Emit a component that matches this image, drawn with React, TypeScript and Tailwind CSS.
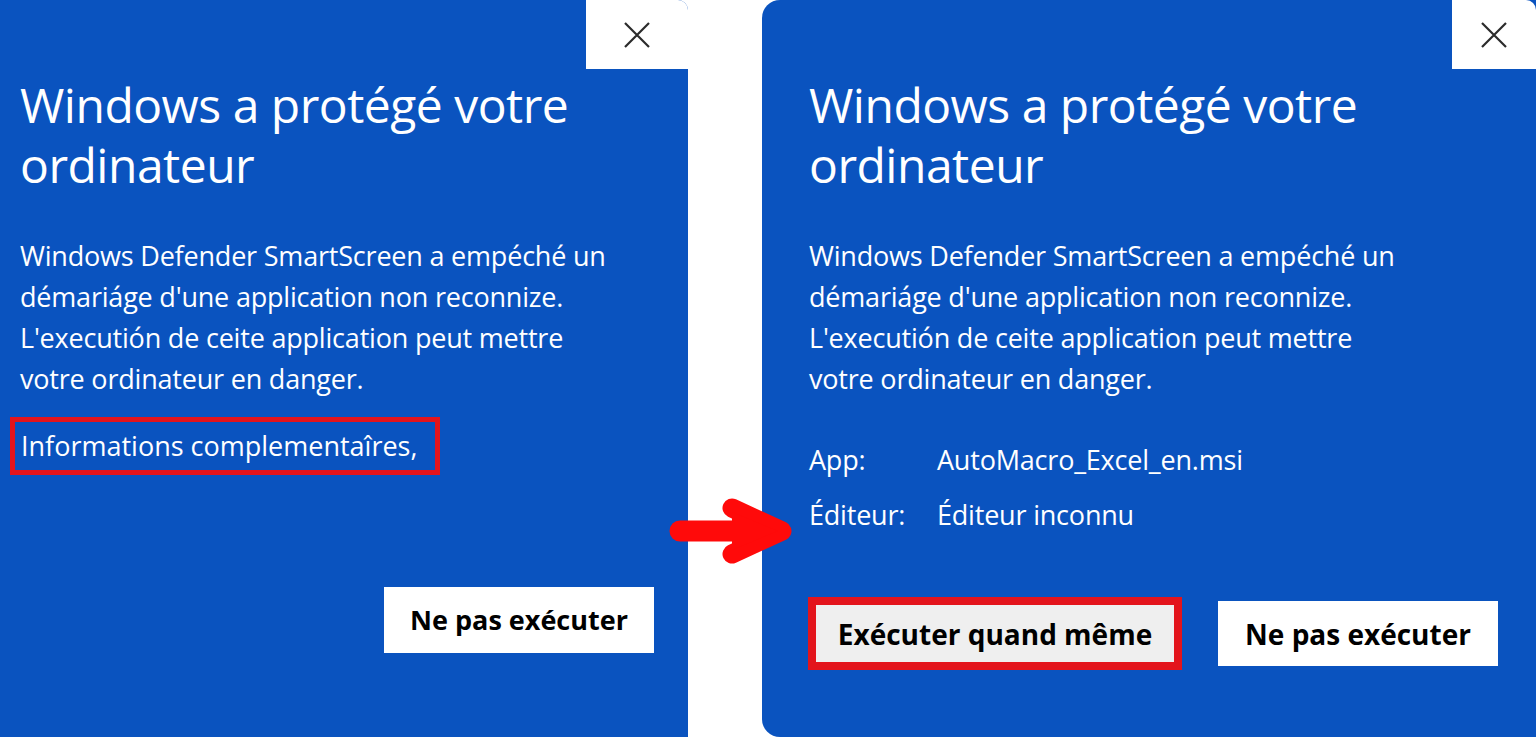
import React from "react";

const font = { fontFamily: '"Open Sans", "Noto Sans", sans-serif' };

function CloseBox({ w }: { w: string }) {
  return (
    <div className={`${w} h-[69px] bg-white flex items-center justify-center rounded-tr-[10px]`}>
      <svg width="28" height="28" viewBox="0 0 28 28">
        <path d="M2 2 L26 26 M26 2 L2 26" stroke="#2b2b2b" strokeWidth="2.2" fill="none" />
      </svg>
    </div>
  );
}

function Title() {
  return (
    <h1 className="text-[48px] leading-[60px] font-normal text-white tracking-[-0.5px]">
      Windows a protégé votre
      <br />
      ordinateur
    </h1>
  );
}

function Body() {
  return (
    <p className="mt-[40px] text-[27px] leading-[41px] text-white tracking-[-0.2px]">
      Windows Defender SmartScreen a empéché un
      <br />
      démariáge d'une application non reconnize.
      <br />
      L'executión de ceite application peut mettre
      <br />
      votre ordinateur en danger.
    </p>
  );
}

export default function App() {
  return (
    <div className="relative w-[1536px] h-[737px] bg-white flex overflow-hidden" style={font}>
      {/* Left panel */}
      <div className="w-[688px] h-full bg-[#0a53bf] flex flex-col rounded-tr-[10px]">
        <div className="flex justify-end">
          <CloseBox w="w-[102px]" />
        </div>
        <div className="pl-[20px] pt-[6px]">
          <Title />
          <Body />
          <div className="mt-[18px] -ml-[10px] w-[430px] h-[58px] border-[5px] border-[#e3141c] flex items-center pl-[6px]">
            <span className="text-[27px] text-white tracking-[0px]">Informations complementaîres,</span>
          </div>
        </div>
        <div className="flex justify-end pr-[34px] mt-[112px]">
          <button className="w-[270px] h-[66px] bg-white text-black font-bold text-[27px] flex items-center justify-center">
            Ne pas exécuter
          </button>
        </div>
      </div>

      <div className="w-[74px]" />

      {/* Right panel */}
      <div className="flex-1 h-full bg-[#0a53bf] rounded-l-[18px] flex flex-col">
        <div className="flex justify-end">
          <CloseBox w="w-[84px]" />
        </div>
        <div className="pl-[47px] pt-[6px]">
          <Title />
          <Body />
          <div className="mt-[33px] text-[27px] leading-[55px] text-white tracking-[-0.2px]">
            <div className="flex">
              <span className="w-[128px]">App:</span>
              <span>AutoMacro_Excel_en.msi</span>
            </div>
            <div className="flex">
              <span className="w-[128px]">Éditeur:</span>
              <span>Éditeur inconnu</span>
            </div>
          </div>
        </div>
        <div className="flex items-center justify-between pl-[46px] pr-[38px] mt-[55px]">
          <div className="border-[8px] border-[#e3141c] w-[374px] h-[73px]">
            <button className="w-full h-full bg-[#efefef] text-black font-bold text-[28px] flex items-center justify-center">
              Exécuter quand même
            </button>
          </div>
          <button className="w-[280px] h-[65px] bg-white text-black font-bold text-[28px] flex items-center justify-center">
            Ne pas exécuter
          </button>
        </div>
      </div>

      {/* Red arrow */}
      <svg className="absolute left-[668px] top-[498px]" width="126" height="66" viewBox="0 0 126 66">
        <path d="M12 33 L108 33" stroke="#ff0a0a" strokeWidth="21" strokeLinecap="round" fill="none" />
        <path d="M64 10 L114 33 L64 56" stroke="#ff0a0a" strokeWidth="19" strokeLinecap="round" strokeLinejoin="round" fill="none" />
        <path d="M64 14 L110 33 L64 52 Z" fill="#ff0a0a" />
      </svg>
    </div>
  );
}
